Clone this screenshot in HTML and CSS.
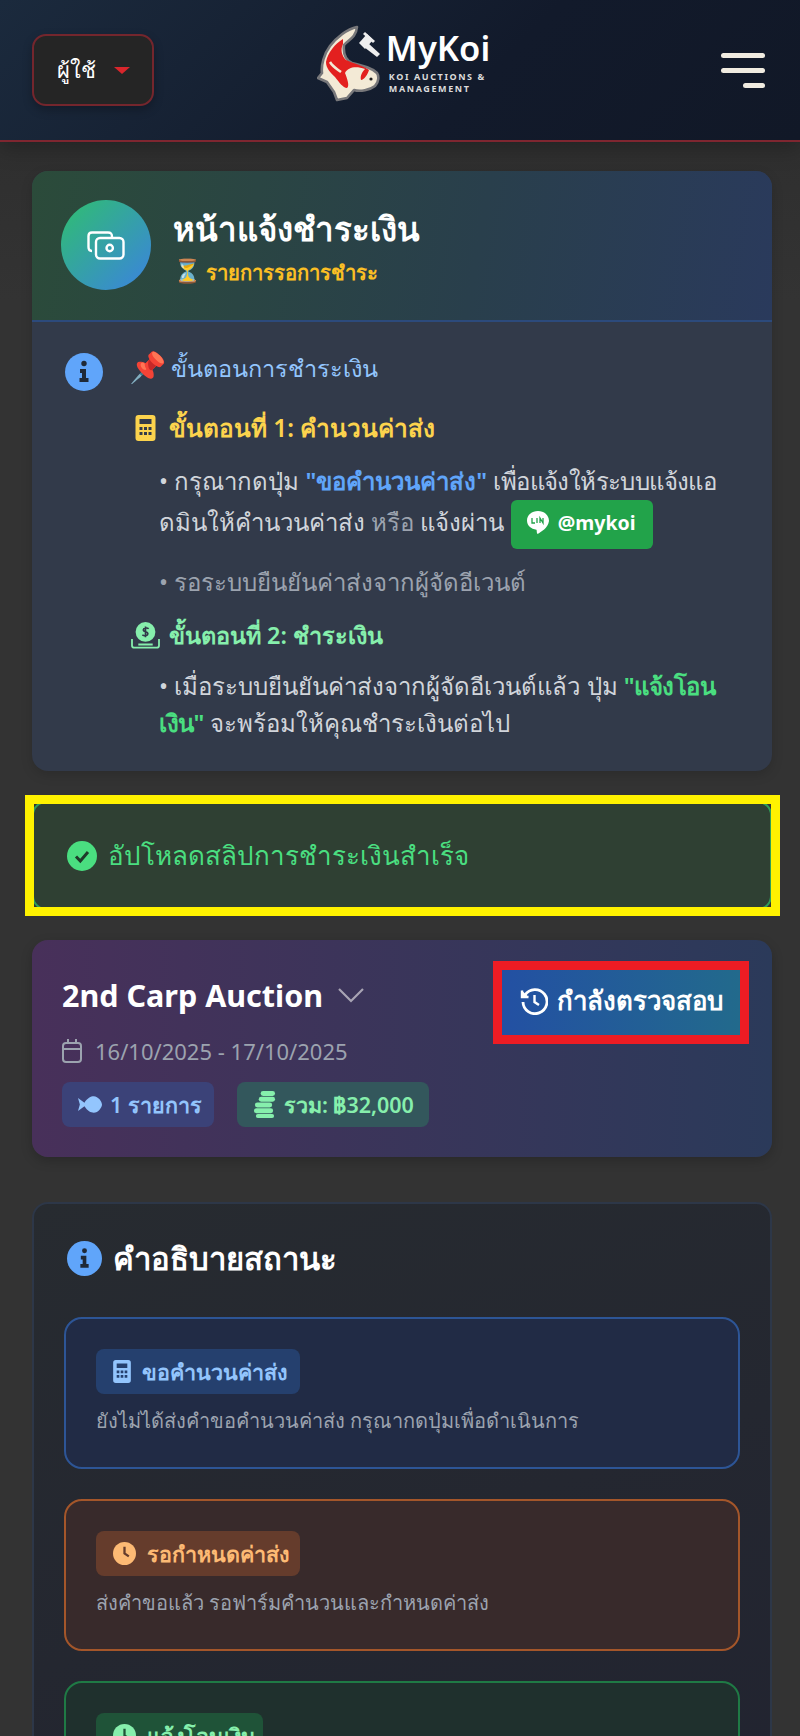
FILE: index.html
```html
<!DOCTYPE html>
<html lang="th">
<head>
<meta charset="utf-8">
<title>MyKoi</title>
<link rel="stylesheet" href="styles.css">
</head>
<body>
<div class="page">
  <header class="topbar">
    <button class="user-btn"><span>ผู้ใช้</span><i class="caret"></i></button>
    <div class="logo">
      <svg class="koi" viewBox="15 14 66 78" width="66" height="78">
        <path d="M55 17C45 19 34 28 28 36C22 44 19 55 20 63L16 68L25 72L32 82L35 90L45 88L52 80C58 82 68 80 73 76C77 72 77 66 75 63C70 58 62 56 50 53C44 50 41 44 42 35C46 30 54 28 55 17Z" fill="#f3ead6" stroke="#77777a" stroke-width="2.600" stroke-linejoin="round"/>
        <path d="M41 29C33 34 26 42 24 52C24 58 28 62 33 67C37 72 41 78 45 78C48 76 45 68 43 63C46 57 54 56 63 59C60 62 58 66 59 70C62 70 66 64 67 60C60 55 50 53 44 50C40 46 38 40 41 34Z" fill="#e3201f"/>
        <path d="M28 52C31 57 35 59 39 62" stroke="#f3ead6" stroke-width="2.500" fill="none"/>
        <circle cx="69" cy="69" r="1.600" fill="#222"/>
        <g fill="#eeeeee"><path d="M57 33L65 24L71 30L63 39Z"/><path d="M66 33L78 44L75 47L62 37Z"/><path d="M63 22L73 31L71 33L61 24Z"/></g>
      </svg>
      <div class="brand">
        <div class="brand-name">MyKoi</div>
        <div class="brand-sub">KOI AUCTIONS &amp;<br>MANAGEMENT</div>
      </div>
    </div>
    <div class="burger"><i></i><i></i><i class="short"></i></div>
  </header>

  <main class="main">
    <section class="pay-card">
      <div class="pay-head">
        <div class="pay-icon">
          <svg viewBox="0 0 38 29" width="38" height="29" fill="none" stroke="#fff" stroke-width="2.400"><path d="M5 20C2.500 20 1.500 19 1.500 16V5C1.500 2.500 2.500 1.500 5 1.500H21C24 1.500 25 2.500 25 6"/><rect x="9" y="7" width="27.500" height="20.500" rx="4"/><circle cx="22.700" cy="17" r="3.200"/></svg>
        </div>
        <div>
          <h1 class="pay-title">หน้าแจ้งชำระเงิน</h1>
          <div class="pay-sub"><span class="emoji hourglass">⏳</span><span>รายการรอการชำระ</span></div>
        </div>
      </div>
      <div class="pay-body">
        <svg class="info-ic" viewBox="0 0 38 38" width="38" height="38"><circle cx="19" cy="19" r="19" fill="#60a5fa"/><circle cx="19" cy="10.500" r="2.700" fill="#1f2937"/><path d="M15 16H21V25H23.500V29H14.500V25H17V20H15Z" fill="#1f2937"/></svg>
        <div class="steps">
          <h2 class="steps-title"><span class="emoji pin">📌</span>ขั้นตอนการชำระเงิน</h2>
          <h3 class="step step-a">
            <svg viewBox="0 0 20 26" width="21" height="26"><path fill-rule="evenodd" d="M3 0H17A3 3 0 0 1 20 3V23A3 3 0 0 1 17 26H3A3 3 0 0 1 0 23V3A3 3 0 0 1 3 0ZM4 4V9H16V4ZM4 12V15H7V12ZM8.500 12V15H11.500V12ZM13 12V15H16V12ZM4 17V20H7V17ZM8.500 17V20H11.500V17ZM13 17V20H16V17Z" fill="#fcd34d"/></svg>
            ขั้นตอนที่ 1: คำนวนค่าส่ง
          </h3>
          <p class="para">• กรุณากดปุ่ม <b class="blue">"ขอคำนวนค่าส่ง"</b> <span class="tight">เพื่อแจ้งให้ระบบแจ้งแอ</span><br>ดมินให้คำนวนค่าส่ง <span class="dim">หรือ</span> แจ้งผ่าน <span class="line-badge"><svg viewBox="0 0 24 26" width="24" height="26"><path d="M12 1C5.900 1 1 5 1 10.500C1 15.500 5 19 10.500 19.800C11 21 10.500 23 11.500 24C15 22 22 18 23 11C23 5 18 1 12 1Z" fill="#fff"/><path d="M6 8V13H9M11 8V13M14 13V8L17 13V8" stroke="#22a34a" stroke-width="1.300" fill="none"/></svg>@mykoi</span></p>
          <p class="para dim para-wait">• รอระบบยืนยันค่าส่งจากผู้จัดอีเวนต์</p>
          <h3 class="step step-b">
            <svg viewBox="0 0 32 30" width="29" height="27"><circle cx="16" cy="11" r="11" fill="#86efac"/><path d="M19.500 7.500C18 6 13.500 6.500 13.500 9C13.500 11.500 18.700 10.500 18.700 13C18.700 15.500 14.500 15.800 12.500 14.300M16 5V17" stroke="#323a4a" stroke-width="1.800" fill="none"/><path d="M1 19V26C1 27.500 2 28.500 3.500 28.500H28.500C30 28.500 31 27.500 31 26V19" stroke="#86efac" stroke-width="2" fill="none"/><path d="M8 25H24" stroke="#86efac" stroke-width="2"/></svg>
            ขั้นตอนที่ 2: ชำระเงิน
          </h3>
          <p class="para para-last">• เมื่อระบบยืนยันค่าส่งจากผู้จัดอีเวนต์แล้ว ปุ่ม <b class="green">"แจ้งโอน<br>เงิน"</b> จะพร้อมให้คุณชำระเงินต่อไป</p>
        </div>
      </div>
    </section>

    <div class="alert">
      <svg viewBox="0 0 30 30" width="30" height="30"><circle cx="15" cy="15" r="15" fill="#4ade80"/><path d="M9 15.500L13.300 20L21 11" stroke="#1f3a2a" stroke-width="3" fill="none"/></svg>
      <span>อัปโหลดสลิปการชำระเงินสำเร็จ</span>
      <div class="mark mark-yellow"></div>
    </div>

    <section class="event">
      <div class="event-info">
        <div class="event-title">2nd Carp Auction
          <svg viewBox="0 0 28 16" width="28" height="16" fill="none" stroke="#a8a4b4" stroke-width="2.200"><path d="M2 2L14 14L26 2"/></svg>
        </div>
        <div class="event-date">
          <svg viewBox="0 0 20 24" width="20" height="24" fill="none" stroke="#9ca3af" stroke-width="2"><rect x="1" y="4" width="18" height="19" rx="3"/><path d="M1 10H19M6 0V5M14 0V5"/></svg>
          16/10/2025 - 17/10/2025
        </div>
        <div class="chips">
          <span class="chip chip-blue">
            <svg viewBox="0 0 26 20" width="24" height="19"><path d="M0 3L7 8C10 3 14 1 17 1C22 1 26 7 26 10C26 13 22 19 17 19C14 19 10 17 7 12L0 17L2 10Z" fill="#93c5fd"/></svg>
            1 รายการ</span>
          <span class="chip chip-green">
            <svg viewBox="0 0 24 30" width="23" height="29" fill="#86efac"><rect x="8" y="1" width="15" height="5" rx="2.500"/><rect x="6" y="7" width="17" height="5" rx="2.500"/><rect x="2" y="13" width="18" height="5" rx="2.500"/><rect x="1" y="19" width="20" height="5" rx="2.500"/><rect x="3" y="25" width="19" height="4" rx="2"/></svg>
            รวม: ฿32,000</span>
        </div>
      </div>
      <button class="status-btn">
        <svg viewBox="0 0 28 28" width="28" height="28" fill="none" stroke="#fff" stroke-width="2.800"><path d="M5 8A12 12 0 1 1 3 15"/><path d="M2 3.500V10H8.500" stroke-width="2.400" fill="#fff"/><path d="M14.500 8V15L19 18" stroke-width="2.400"/></svg>
        <span>กำลังตรวจสอบ</span>
        <div class="mark mark-red"></div>
      </button>
    </section>

    <section class="legend">
      <h2 class="legend-title">
        <svg viewBox="0 0 38 38" width="35" height="35"><circle cx="19" cy="19" r="19" fill="#60a5fa"/><circle cx="19" cy="10.500" r="2.700" fill="#1f2937"/><path d="M15 16H21V25H23.500V29H14.500V25H17V20H15Z" fill="#1f2937"/></svg>
        คำอธิบายสถานะ
      </h2>
      <div class="item item-blue">
        <span class="tag">
          <svg viewBox="0 0 20 26" width="18" height="23"><path fill-rule="evenodd" d="M3 0H17A3 3 0 0 1 20 3V23A3 3 0 0 1 17 26H3A3 3 0 0 1 0 23V3A3 3 0 0 1 3 0ZM4 4V9H16V4ZM4 12V15H7V12ZM8.500 12V15H11.500V12ZM13 12V15H16V12ZM4 17V20H7V17ZM8.500 17V20H11.500V17ZM13 17V20H16V17Z" fill="#93c5fd"/></svg>
          ขอคำนวนค่าส่ง</span>
        <p class="item-text">ยังไม่ได้ส่งคำขอคำนวนค่าส่ง กรุณากดปุ่มเพื่อดำเนินการ</p>
      </div>
      <div class="item item-orange">
        <span class="tag">
          <svg viewBox="0 0 24 24" width="23" height="23"><circle cx="12" cy="12" r="12" fill="#fdba74"/><path d="M12 5V12L16.500 15" stroke="#653c2c" stroke-width="2.400" fill="none"/></svg>
          รอกำหนดค่าส่ง</span>
        <p class="item-text">ส่งคำขอแล้ว รอฟาร์มคำนวนและกำหนดค่าส่ง</p>
      </div>
      <div class="item item-green">
        <span class="tag">
          <svg viewBox="0 0 24 24" width="23" height="23"><circle cx="12" cy="12" r="12" fill="#86efac"/><path d="M12 5V12L16.500 15" stroke="#1f5338" stroke-width="2.400" fill="none"/></svg>
          แจ้งโอนเงิน</span>
        <p class="item-text">ค่าส่งได้รับการยืนยันแล้ว สามารถแจ้งโอนเงินได้</p>
      </div>
    </section>
  </main>
</div>
</body>
</html>
```
FILE: styles.css
```css
* { box-sizing: border-box; }
html, body { margin: 0; padding: 0; }
body { background: #333333; color: #fff; font-family: "Noto Sans", sans-serif; }
h1, h2, h3, p { margin: 0; }
svg { flex: none; }
.emoji { font-family: "Noto Color Emoji", sans-serif; font-weight: 400; }

.page { height: 100vh; overflow: hidden; background: linear-gradient(#2b2b2b, #333333 300px); }

.topbar {
  height: 142px; padding: 0 35px 0 32px;
  display: flex; align-items: center; justify-content: space-between;
  background: linear-gradient(135deg, #1b2a3d, #121a2b 60%, #111827);
  border-bottom: 2px solid #7f2630;
  box-shadow: 0 6px 20px rgba(0,0,0,.25);
}
.user-btn {
  width: 122px; height: 72px; padding: 0 22px 0 23px;
  display: flex; align-items: center; justify-content: space-between;
  background: #252525; color: #fff;
  border: 2px solid #74262d; border-radius: 14px;
  font: 500 22px "Noto Sans", sans-serif;
  box-shadow: 0 4px 10px rgba(0,0,0,.25);
}
.caret { width: 0; height: 0; border: 8px solid transparent; border-top: 7px solid #d9262c; border-bottom: 0; }
.logo { display: flex; align-items: flex-start; gap: 3px; margin: 0 68px 14px 0; }
.brand { margin-top: 1px; }
.brand-name { font: 600 34.500px/46px "Noto Sans", sans-serif; color: #fff; }
.brand-sub { font: 700 9px/12px "Noto Sans", sans-serif; letter-spacing: 1.600px; color: #dcdcdc; padding-left: 3px; white-space: nowrap; }
.burger { width: 44px; display: flex; flex-direction: column; align-items: flex-end; gap: 10px; }
.burger i { display: block; width: 44px; height: 5px; background: #f0ebe0; border-radius: 3px; }
.burger .short { width: 22px; }

.main { padding: 29px 28px 0 32px; display: flex; flex-direction: column; }

.pay-card { background: #323a4a; border-radius: 16px; overflow: hidden; height: 600px; box-shadow: 0 4px 12px rgba(0,0,0,.15); }
.pay-head {
  height: 151px; padding: 29px 29px; display: flex; gap: 22px;
  background: linear-gradient(100deg, #2b4b3a, #293f4c 60%, #2a3a5c);
  border-bottom: 2px solid #2c4a7c;
}
.pay-icon {
  width: 90px; height: 90px; border-radius: 50%;
  display: flex; align-items: center; justify-content: center;
  background: linear-gradient(135deg, #2fbf6f, #3b82e0);
}
.pay-title { font-size: 33px; line-height: 48px; font-weight: 700; margin-top: 5px; }
.pay-sub { display: flex; align-items: center; gap: 4px; font-size: 20.200px; line-height: 32px; font-weight: 600; color: #fbbf24; margin-top: 3px; }
.hourglass { font-size: 23px; }

.pay-body { padding: 26px 30px 0 33px; display: flex; gap: 26px; }
.info-ic { margin-top: 5px; }
.steps { flex: 1; }
.steps-title { display: flex; align-items: center; gap: 2px; font-size: 23.500px; line-height: 40px; font-weight: 500; color: #93c5fd; }
.pin { font-size: 30px; width: 40px; }
.step { display: flex; align-items: center; font-size: 24.400px; line-height: 40px; font-weight: 600; margin-top: 20px; }
.step-a { color: #fcd34d; gap: 13px; padding-left: 6px; }
.step-b { color: #86efac; gap: 9px; margin-top: 14px; padding-left: 2px; font-size: 23.500px; }
.para { font-size: 24px; line-height: 38px; color: #d1d5db; margin: 14px 0 0 30px; white-space: nowrap; }
.para-wait { margin-top: 14px; }
.para-last { margin-top: 12px; line-height: 37px; }
.dim { color: #9ca3af; }
.tight { letter-spacing: -.6px; }
.blue { color: #60a5fa; font-weight: 600; }
.green { color: #4ade80; font-weight: 600; letter-spacing: -.5px; }
.line-badge {
  display: inline-flex; align-items: center; gap: 8px; vertical-align: middle;
  height: 49px; padding: 0 17px 4px 15px;
  background: #22a34a; border-radius: 6px; color: #fff; font-size: 19.500px; font-weight: 700;
}

.alert {
  position: relative; height: 109px; margin-top: 30px; padding: 0 33px;
  display: flex; align-items: center; gap: 11px;
  background: #2f4033; border: 2px solid #2f9e5a; border-radius: 14px;
  color: #4ade80; font-size: 26px;
}
.mark { position: absolute; border-style: solid; border-width: 9px; pointer-events: none; }
.mark-yellow { border-color: #fff200; top: -8px; bottom: -8px; left: -9px; right: -10px; }
.mark-red { border-color: #ed1c24; top: -9px; bottom: -9px; left: -9px; right: -9px; }

.event {
  height: 217px; margin-top: 30px; padding: 27px 32px 0 30px;
  display: flex; justify-content: space-between; align-items: flex-start;
  background: linear-gradient(90deg, #48305a, #2b3a5a);
  border-radius: 16px; box-shadow: 0 4px 12px rgba(0,0,0,.2);
}
.event-title { display: flex; align-items: center; gap: 14px; font-size: 30.500px; line-height: 56px; font-weight: 700; }
.event-date { display: flex; align-items: center; gap: 13px; margin-top: 13px; font-size: 22px; line-height: 30px; color: #9ca3af; }
.chips { display: flex; gap: 23px; margin-top: 16px; }
.chip { height: 45px; display: flex; align-items: center; gap: 8px; padding: 0 15px 0 16px; border-radius: 8px; font-size: 21.500px; font-weight: 600; }
.chip-blue { background: #3b4278; color: #93c5fd; padding-right: 12px; }
.chip-green { background: #33575c; color: #86efac; }
.status-btn {
  position: relative; width: 238px; height: 65px; margin: 3px 0 0; padding: 0 0 4px 18px;
  display: flex; align-items: center; gap: 9px;
  background: linear-gradient(90deg, #2350a3, #226a8c); border: 0; color: #fff;
  font: 600 25.800px "Noto Sans", sans-serif;
}

.legend {
  margin-top: 45px; padding: 28px 30px 40px;
  background: linear-gradient(160deg, #272b30, #212330);
  border: 2px solid #2d3748; border-radius: 16px;
}
.legend-title { display: flex; align-items: center; gap: 11px; font-size: 31px; line-height: 52px; font-weight: 700; padding-left: 3px; }
.item { height: 152px; padding: 30px 30px 0; margin-top: 30px; border: 2px solid; border-radius: 18px; }
.legend-title + .item { margin-top: 33px; }
.tag { display: inline-flex; align-items: center; gap: 11px; height: 45px; padding: 0 13px 0 17px; border-radius: 8px; font-size: 21.500px; font-weight: 600; white-space: nowrap; }
.item-text { margin-top: 8px; font-size: 20px; line-height: 38px; color: #9ca3af; }
.item-blue { background: #212b45; border-color: #2d5596; }
.item-blue .tag { background: #25406e; color: #93c5fd; }
.item-orange { background: #382a2b; border-color: #a4562a; }
.item-orange .tag { background: #653c2c; color: #fdba74; padding-right: 11px; }
.item-green { background: #1f302d; border-color: #1f7a45; }
.item-green .tag { background: #1f5338; color: #86efac; padding-right: 7px; }
```
